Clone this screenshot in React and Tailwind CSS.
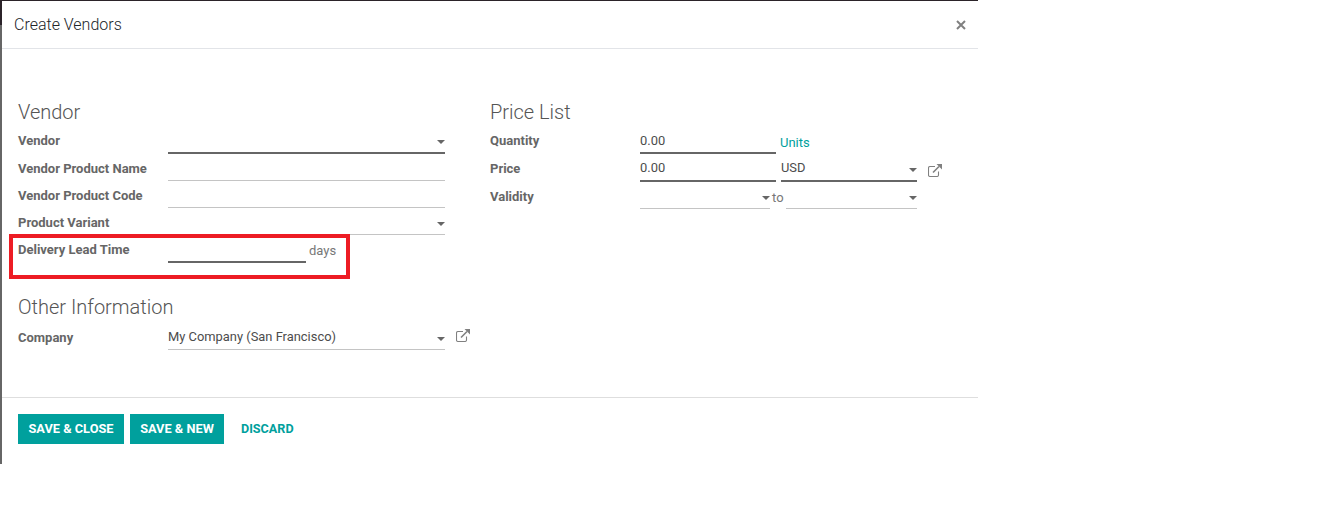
const font = { fontFamily: "Roboto, sans-serif" };

function Caret({ className = "" }) {
  return (
    <svg width="8" height="4" viewBox="0 0 8 4" className={`shrink-0 ${className}`}>
      <path d="M0 0h8L4 4z" fill="#666666" />
    </svg>
  );
}

function Field({ strong, value, caret, className = "" }) {
  return (
    <div
      className={`flex items-center justify-between h-[27px] pt-[3px] text-[12.9px] leading-none text-[#4c4c4c] ${
        strong ? "border-b-2 border-[#666666]" : "border-b border-[#c4c4c4]"
      } ${className}`}
    >
      <span>{value}</span>
      {caret && <Caret className="mt-[2px]" />}
    </div>
  );
}

function Label({ children, className = "pt-[8px]" }) {
  return <div className={`text-[13px] leading-[14px] font-bold text-[#666666] ${className}`}>{children}</div>;
}

function LinkIcon() {
  return (
    <svg width="14" height="13" viewBox="0 0 14 13" fill="none">
      <path d="M7 2.5H2a1.5 1.5 0 0 0-1.5 1.5v7A1.5 1.5 0 0 0 2 12.5h7a1.5 1.5 0 0 0 1.5-1.5V7.5" stroke="#808080" strokeWidth="1.1" />
      <path d="M5 8.5l6-6" stroke="#808080" strokeWidth="1.6" />
      <path d="M8.5 0H14v5.500z" fill="#808080" />
    </svg>
  );
}

export default function App() {
  return (
    <div className="w-[1335px] h-[505px] bg-white overflow-hidden" style={font}>
      <div className="w-[978px] h-px bg-[#2b2329]" />
      <div className="flex">
        <div className="w-[2px]">
          <div className="h-[24px] bg-[#2b2329]" />
          <div className="h-[439px] bg-[#666666]" />
        </div>
        <div className="w-[976px]">
          <div className="flex items-center justify-between h-[48px] border-b border-[#e2e4e8] pl-3 pr-3">
            <h4 className="text-[16px] font-light text-[#212529]">Create Vendors</h4>
            <svg width="10" height="10" viewBox="0 0 10 10">
              <path d="M1 1l8 8M9 1l-8 8" stroke="#808080" strokeWidth="2" />
            </svg>
          </div>

          <div className="flex pl-4 pt-[51px] h-[349px] border-b border-[#dedede]">
            <div className="w-[472px]">
              <h2 className="h-[27px] text-[20px] font-light leading-[24px] text-[#555555]">Vendor</h2>
              <div className="grid grid-cols-[150px_277px]">
                <Label className="pt-[7px]">Vendor</Label>
                <Field strong caret />
                <Label>Vendor Product Name</Label>
                <Field />
                <Label>Vendor Product Code</Label>
                <Field />
                <Label>Product Variant</Label>
                <Field caret />
              </div>

              <div className="relative flex h-[28px]">
                <div className="w-[150px]">
                  <Label>Delivery Lead Time</Label>
                </div>
                <Field strong className="w-[138px] h-[28px]" />
                <span className="ml-[3px] pt-[9px] text-[13px] leading-none text-[#777777]">days</span>
                <div className="absolute left-[-9px] top-[-1px] w-[341px] h-[45px] border-4 border-[#ed1c24]" />
              </div>

              <h2 className="mt-[32px] h-[28px] text-[20px] font-light leading-[24px] text-[#555555]">Other Information</h2>
              <div className="grid grid-cols-[150px_277px_auto]">
                <Label>Company</Label>
                <Field value="My Company (San Francisco)" caret />
                <div className="ml-[11px] pt-[6px]">
                  <LinkIcon />
                </div>
              </div>
            </div>

            <div>
              <h2 className="h-[27px] text-[20px] font-light leading-[24px] text-[#555555]">Price List</h2>
              <div className="flex">
                <div className="w-[150px]">
                  <Label className="pt-[7px]">Quantity</Label>
                </div>
                <Field strong value="0.00" className="w-[136px]" />
                <div className="pt-[9px] ml-[4px] text-[13px] leading-none text-[#00a09d]">Units</div>
              </div>
              <div className="flex">
                <div className="w-[150px]">
                  <Label>Price</Label>
                </div>
                <Field strong value="0.00" className="w-[136px] h-[28px]" />
                <Field strong value="USD" caret className="w-[136px] h-[28px] ml-[5px]" />
                <div className="ml-[11px] pt-[10px]">
                  <LinkIcon />
                </div>
              </div>
              <div className="flex">
                <div className="w-[150px]">
                  <Label>Validity</Label>
                </div>
                <Field caret className="w-[130px]" />
                <span className="w-[16px] pt-[9px] pl-[2px] text-[13px] leading-none text-[#777777]">to</span>
                <Field caret className="w-[131px]" />
              </div>
            </div>
          </div>

          <div className="flex items-center pl-4 pt-4 gap-[6px]">
            <button className="w-[106px] h-[30px] bg-[#00a09d] text-white text-[12.8px] font-bold">SAVE &amp; CLOSE</button>
            <button className="w-[94px] h-[30px] bg-[#00a09d] text-white text-[12.8px] font-bold">SAVE &amp; NEW</button>
            <button className="h-[30px] px-[11px] text-[#00a09d] text-[12.6px] font-bold">DISCARD</button>
          </div>
        </div>
      </div>
    </div>
  );
}
